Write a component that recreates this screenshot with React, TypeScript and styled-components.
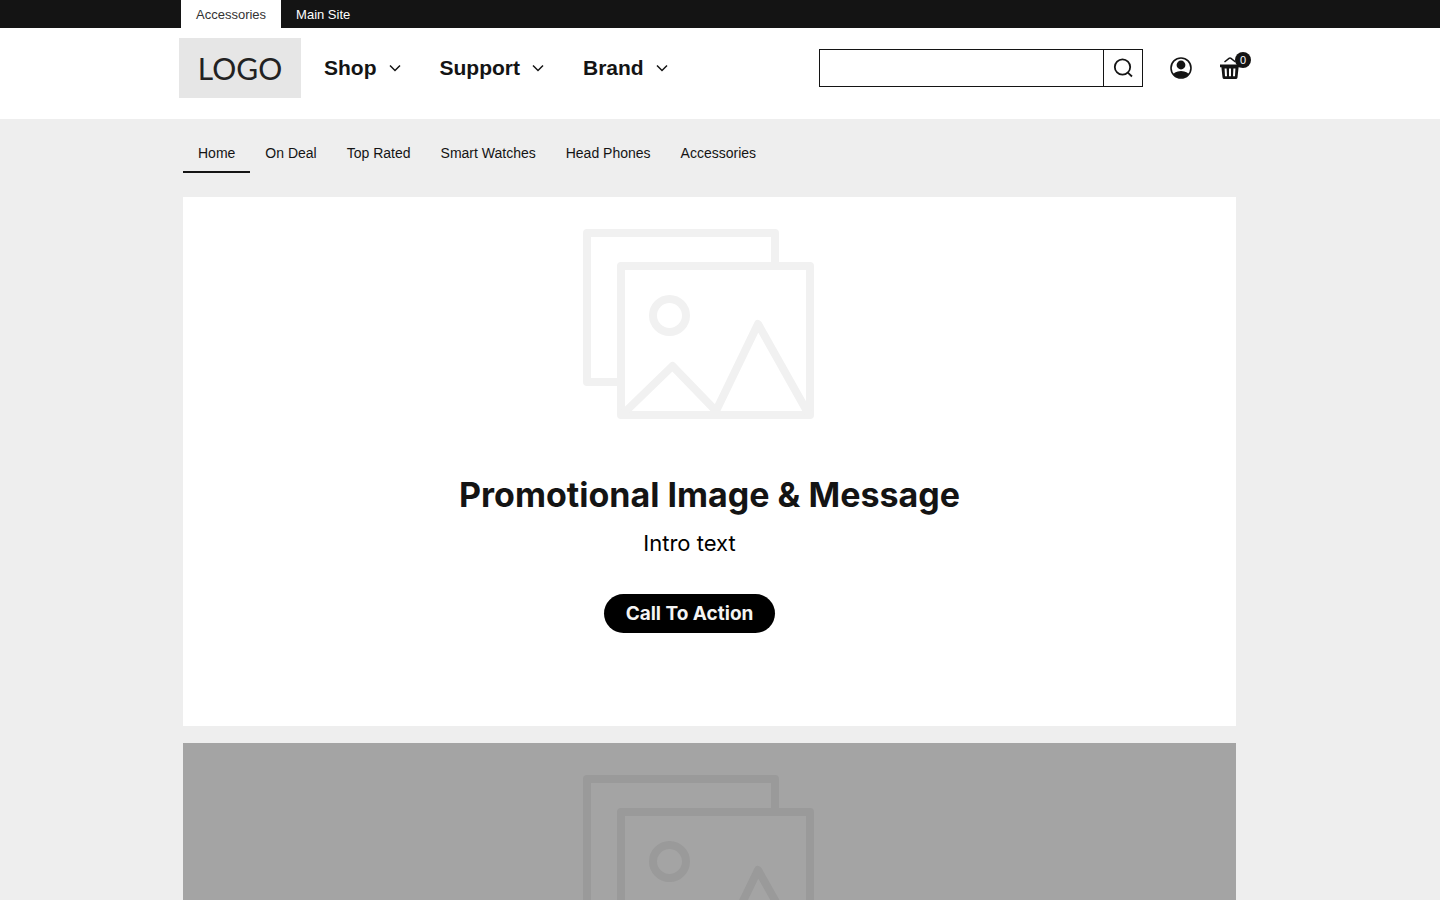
import React from "react";
import styled, { createGlobalStyle } from "styled-components";

const GlobalStyle = createGlobalStyle`
  *, *::before, *::after { box-sizing: border-box; }
  body {
    margin: 0;
    background: #eeeeee;
    color: #141414;
    font-family: "Liberation Sans", Arial, sans-serif;
  }
  a { color: inherit; text-decoration: none; }
  button { font: inherit; color: inherit; cursor: pointer; }
`;

const Container = styled.div`
  width: 100%;
  max-width: 1074px;
  margin: 0 auto;
`;

const TopBar = styled.div`
  background: #141414;
`;

const TopTabs = styled(Container).attrs({ as: "nav" })`
  display: flex;
`;

const TopTab = styled.a<{ $active?: boolean }>`
  height: 28px;
  padding: 0 15px;
  margin-left: ${(p) => (p.$active ? "-2px" : "0")};
  font-size: 13px;
  line-height: 30px;
  background: ${(p) => (p.$active ? "#ffffff" : "transparent")};
  color: ${(p) => (p.$active ? "#333333" : "#ffffff")};
`;

const Header = styled.header`
  background: #ffffff;
`;

const HeaderRow = styled(Container)`
  display: flex;
  align-items: center;
  padding: 10px 16px 21px 0;
`;

const Logo = styled.a`
  display: flex;
  align-items: center;
  justify-content: center;
  width: 122px;
  height: 60px;
  margin-left: -4px;
  background: #e6e6e6;
  color: #222222;
  font-family: Lato, sans-serif;
  font-size: 30px;
  line-height: 36px;
`;

const MainNav = styled.nav`
  display: flex;
  gap: 38px;
  margin-left: 23px;
`;

const MenuButton = styled.button`
  display: flex;
  align-items: center;
  gap: 11px;
  padding: 0;
  border: 0;
  background: none;
  font-size: 21px;
  font-weight: 700;
  line-height: 28px;
`;

const Search = styled.form`
  display: flex;
  width: 324px;
  height: 38px;
  margin-left: auto;
  border: 1px solid #141414;
`;

const SearchInput = styled.input`
  flex: 1;
  min-width: 0;
  padding: 0 12px;
  border: 0;
  outline: 0;
  background: #ffffff;
  font: 14px "Liberation Sans", Arial, sans-serif;
`;

const SearchButton = styled.button`
  display: flex;
  align-items: center;
  justify-content: center;
  width: 39px;
  padding: 0;
  border: 0;
  border-left: 1px solid #141414;
  background: none;
`;

const IconButton = styled.button`
  position: relative;
  display: flex;
  padding: 0;
  border: 0;
  margin-left: 26px;
  background: none;
`;

const Badge = styled.span`
  position: absolute;
  top: -4px;
  right: -10px;
  width: 16px;
  height: 16px;
  border-radius: 50%;
  background: #141414;
  color: #ffffff;
  font-size: 11px;
  line-height: 16px;
  text-align: center;
`;

const SubNav = styled(Container).attrs({ as: "nav" })`
  display: flex;
  padding: 16px 0 24px;
`;

const SubLink = styled.a<{ $active?: boolean }>`
  padding: 8px 15px;
  font-size: 14px;
  line-height: 20px;
  border-bottom: 2px solid ${(p) => (p.$active ? "#141414" : "transparent")};
`;

const Main = styled(Container).attrs({ as: "main" })`
  display: grid;
  gap: 17px;
  padding-right: 21px;
`;

const Card = styled.section<{ $muted?: boolean }>`
  display: flex;
  flex-direction: column;
  align-items: center;
  min-height: 529px;
  padding: 32px 0;
  background: ${(p) => (p.$muted ? "#a4a4a4" : "#ffffff")};
  color: ${(p) => (p.$muted ? "#9a9a9a" : "#f1f1f1")};
`;

const Art = styled.svg`
  margin-right: 22px;
`;

const Title = styled.h1`
  margin: 54px 0 0;
  color: #141414;
  font-family: Inter, sans-serif;
  font-size: 34px;
  font-weight: 700;
  line-height: 44px;
`;

const Intro = styled.p`
  margin: 12px 40px 0 0;
  color: #000000;
  font-family: Inter, sans-serif;
  font-size: 22px;
  line-height: 28px;
`;

const Cta = styled.button`
  height: 39px;
  margin: 37px 40px 0 0;
  padding: 0 22px;
  border: 0;
  border-radius: 20px;
  background: #000000;
  color: #f4f4f4;
  font-family: Inter, sans-serif;
  font-size: 19px;
  font-weight: 700;
  line-height: 38px;
`;

const Chevron = () => (
  <svg width="14" height="14" viewBox="0 0 14 14" fill="none" stroke="#141414" strokeWidth="1.5" aria-hidden="true">
    <path d="M2 4.5 L7 9.5 L12 4.5" />
  </svg>
);

const SearchIcon = () => (
  <svg width="22" height="22" viewBox="0 0 22 22" fill="none" stroke="#141414" strokeWidth="1.8" aria-hidden="true">
    <circle cx="10.5" cy="10" r="7.7" />
    <path d="M15.8 15.6 L20 19.5" />
  </svg>
);

const UserIcon = () => (
  <svg width="24" height="24" viewBox="0 0 24 24" aria-hidden="true">
    <defs>
      <clipPath id="user-disc">
        <circle cx="12" cy="12" r="10" />
      </clipPath>
    </defs>
    <ellipse cx="12" cy="20.5" rx="8.5" ry="5.5" fill="#141414" clipPath="url(#user-disc)" />
    <circle cx="12" cy="9" r="4.4" fill="#141414" />
    <circle cx="12" cy="12" r="10" fill="none" stroke="#141414" strokeWidth="1.6" />
  </svg>
);

const BasketIcon = () => (
  <svg width="22" height="24" viewBox="0 0 22 24" aria-hidden="true">
    <path d="M5.5 6 L10 2.3 Q11 1.6 12 2.3 L16.5 6" fill="none" stroke="#141414" strokeWidth="1.5" />
    <path d="M1 8.5 H21 V11.3 H19.6 L18.5 21.4 Q18.3 23 16.8 23 H5.2 Q3.7 23 3.5 21.4 L2.4 11.3 H1 Z" fill="#141414" />
    <path d="M6.6 12.5 L7 20.3 M11 12.5 V20.3 M15.4 12.5 L15 20.3" stroke="#ffffff" strokeWidth="2" />
  </svg>
);

const PicturePlaceholder = () => (
  <Art
    width="231"
    height="190"
    viewBox="0 0 231 190"
    fill="none"
    stroke="currentColor"
    strokeWidth="8"
    strokeLinejoin="round"
    role="img"
    aria-label="Image placeholder"
  >
    <path d="M192 36 V4 H4 V153 H36" />
    <rect x="38" y="37" width="189" height="149" />
    <circle cx="86.5" cy="86.5" r="16.5" />
    <path d="M41 184 L89.5 137 L133 182 L175 95 L225 184" />
  </Art>
);

const menus = ["Shop", "Support", "Brand"];
const categories = ["Home", "On Deal", "Top Rated", "Smart Watches", "Head Phones", "Accessories"];

export default function App() {
  return (
    <>
      <GlobalStyle />
      <TopBar>
        <TopTabs>
          <TopTab href="#accessories" $active>Accessories</TopTab>
          <TopTab href="#main">Main Site</TopTab>
        </TopTabs>
      </TopBar>
      <Header>
        <HeaderRow>
          <Logo href="#home">LOGO</Logo>
          <MainNav>
            {menus.map((name) => (
              <MenuButton key={name} type="button">
                {name}
                <Chevron />
              </MenuButton>
            ))}
          </MainNav>
          <Search role="search">
            <SearchInput type="search" aria-label="Search" />
            <SearchButton type="button" aria-label="Submit search">
              <SearchIcon />
            </SearchButton>
          </Search>
          <IconButton type="button" aria-label="Account">
            <UserIcon />
          </IconButton>
          <IconButton type="button" aria-label="Basket">
            <BasketIcon />
            <Badge>0</Badge>
          </IconButton>
        </HeaderRow>
      </Header>
      <SubNav>
        {categories.map((name) => (
          <SubLink key={name} href="#category" $active={name === "Home"}>
            {name}
          </SubLink>
        ))}
      </SubNav>
      <Main>
        <Card>
          <PicturePlaceholder />
          <Title>Promotional Image &amp; Message</Title>
          <Intro>Intro text</Intro>
          <Cta type="button">Call To Action</Cta>
        </Card>
        <Card $muted>
          <PicturePlaceholder />
        </Card>
      </Main>
    </>
  );
}
